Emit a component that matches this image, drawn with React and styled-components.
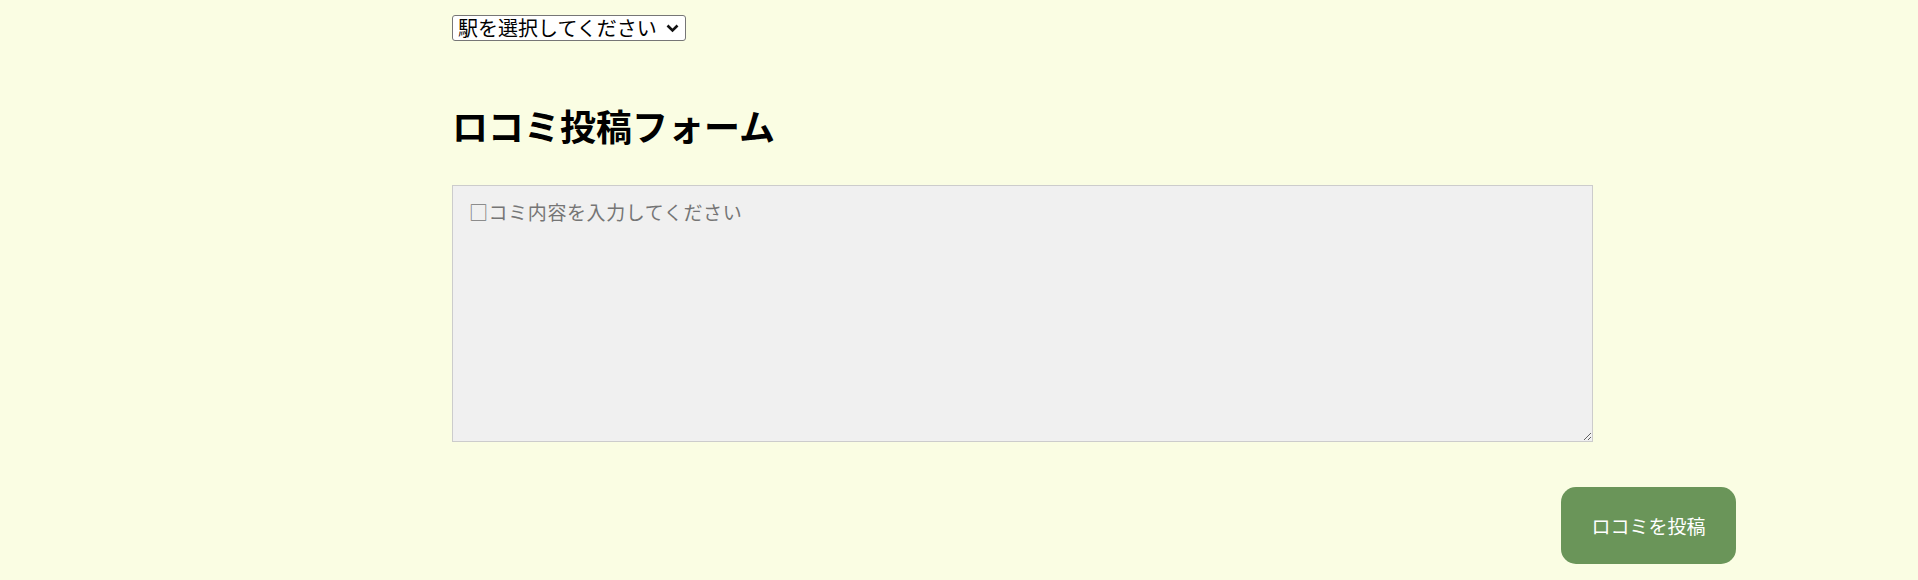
import styled, { createGlobalStyle } from "styled-components"

const Global = createGlobalStyle`
  html, body {
    margin: 0;
    background-color: #fafde3;
  }
  body {
    font-family: "Noto Sans CJK JP", "Noto Sans", sans-serif;
    color: #000;
  }
`

const Page = styled.div`
  display: flex;
  flex-direction: column;
  align-items: flex-start;
  padding: 15px 0 0 452px;
  width: 1284px;
`
const SelectWrap = styled.div`
  position: relative;
  display: inline-flex;
`
const StationSelect = styled.select`
  appearance: none;
  box-sizing: border-box;
  height: 26px;
  width: 234px;
  font-family: "Noto Sans CJK JP", sans-serif;
  font-size: 20px;
  line-height: 24px;
  color: #000;
  background-color: #fff;
  border: 1px solid #767676;
  border-radius: 3px;
  padding: 0 24px 0 5px;
`
const Chevron = styled.svg`
  position: absolute;
  right: 7px;
  top: 9px;
  pointer-events: none;
`
const Title = styled.h1`
  margin: 58px 0 0 0;
  font-size: 36px;
  line-height: 52px;
  font-weight: 700;
`
const Review = styled.textarea`
  box-sizing: border-box;
  margin-top: 34px;
  width: 1141px;
  height: 257px;
  padding: 12px 16px;
  background-color: #f0f0f0;
  border: 1px solid #cccccc;
  font-family: "Noto Sans CJK JP", sans-serif;
  font-size: 19px;
  letter-spacing: 0.6px;
  &::placeholder {
    color: #757575;
  }
`
const Actions = styled.div`
  display: flex;
  justify-content: flex-end;
  align-self: stretch;
  margin-top: 45px;
`
const PostBtn = styled.button`
  width: 175px;
  height: 77px;
  border: 0;
  border-radius: 15px;
  background-color: #6a9559;
  color: #fff;
  font-family: "Noto Sans CJK JP", sans-serif;
  font-size: 19px;
`

function App() {
  return (
    <Page>
      <Global />
      <SelectWrap>
        <StationSelect defaultValue="">
          <option value="">駅を選択してください</option>
        </StationSelect>
        <Chevron width="13" height="9" viewBox="0 0 13 9">
          <path d="M1.5 1.5 L6.5 6.5 L11.5 1.5" fill="none" stroke="#111" strokeWidth="2.6" />
        </Chevron>
      </SelectWrap>
      <Title>ロコミ投稿フォーム</Title>
      <Review placeholder="□コミ内容を入力してください" />
      <Actions>
        <PostBtn>ロコミを投稿</PostBtn>
      </Actions>
    </Page>
  )
}

export default App
